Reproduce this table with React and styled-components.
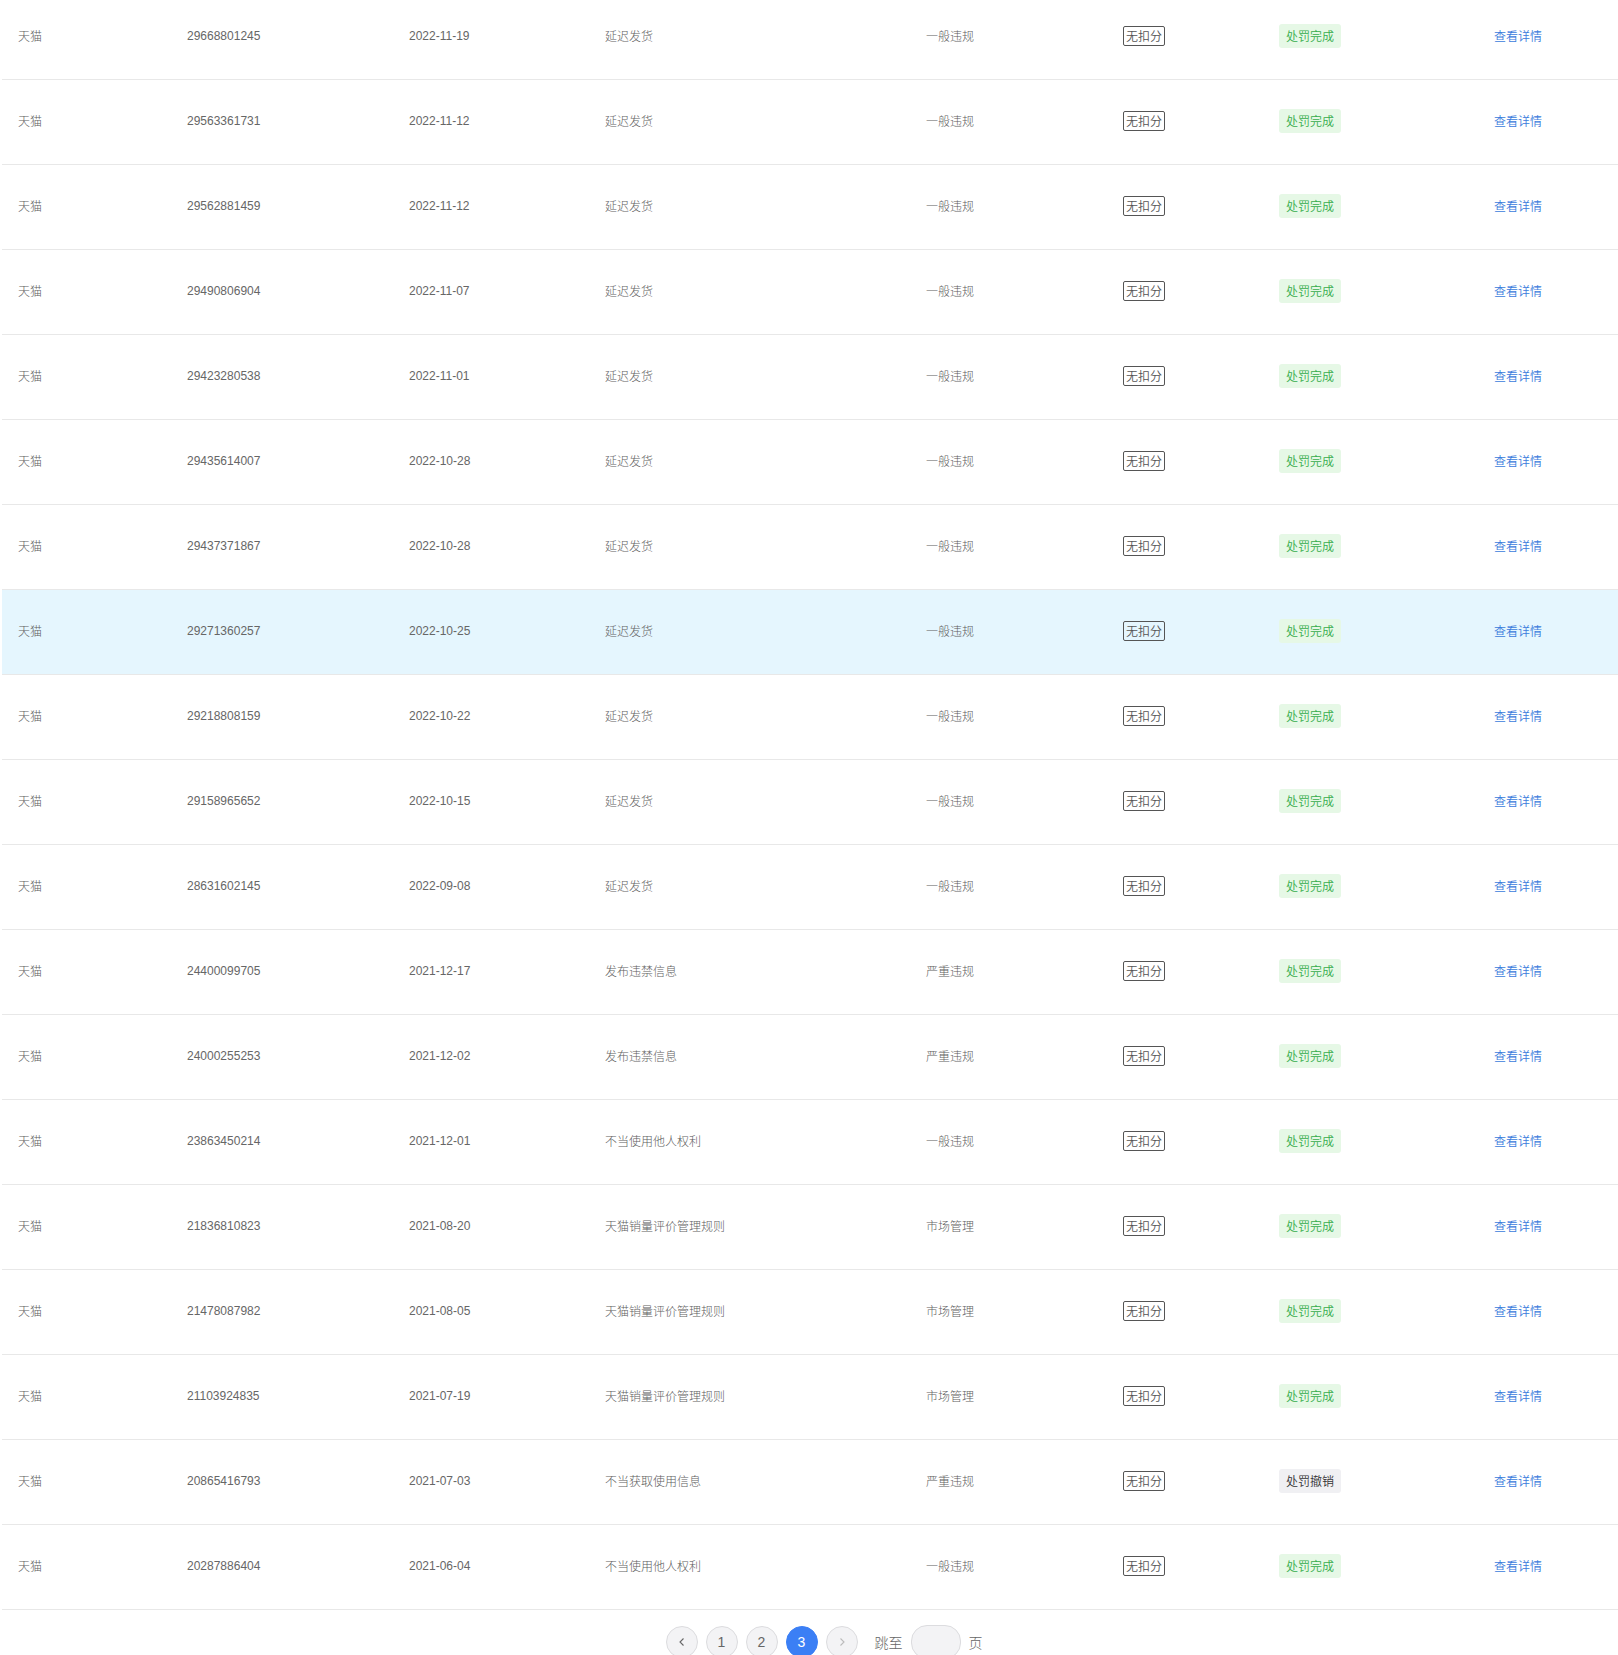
import React from "react";
import styled, { createGlobalStyle, css } from "styled-components";

const Global = createGlobalStyle`
  html, body { margin: 0; padding: 0; background: #fff; }
  body { font-family: "Liberation Sans", Arial, "Noto Sans CJK SC", sans-serif; overflow: hidden; }
`;

const cjk = css`
  font-family: "Noto Sans CJK SC", "Liberation Sans", sans-serif;
  font-weight: 300;
`;

const Page = styled.div`
  width: 1618px;
  height: 1655px;
  overflow: hidden;
`;

const Table = styled.div`
  margin: -5px 0 0 2px;
  display: flex;
  flex-direction: column;
`;

const Row = styled.div`
  display: grid;
  grid-template-columns: 169px 222px 196px 321px 197px 156px 215px 1fr;
  height: 84px;
  border-bottom: 1px solid #e8e8e8;
  background: ${(p) => (p.$active ? "#e5f6fe" : "#fff")};
`;

const Cell = styled.div`
  display: flex;
  align-items: center;
  padding-left: 16px;
  padding-bottom: ${(p) => (p.$cjk || p.$lift ? 4 : 2)}px;
  font-size: 12px;
  color: #666;
  white-space: nowrap;
  ${(p) => p.$cjk && cjk}
  ${(p) => p.$cjk && "color: #606060;"}
`;

const Tag = styled.span`
  ${cjk}
  font-weight: 350;
  display: inline-block;
  border: 1px solid #555;
  border-radius: 2px;
  padding: 0 2px;
  height: 18px;
  line-height: 17px;
  font-size: 12px;
  color: #555;
`;

const Status = styled.span`
  ${cjk}
  font-weight: 350;
  display: inline-block;
  height: 24px;
  line-height: 23px;
  padding: 0 7px;
  border-radius: 3px;
  font-size: 12px;
  background: ${(p) => (p.$revoked ? "#f0f0f3" : "#e6f8e6")};
  color: ${(p) => (p.$revoked ? "#333" : "#36ad4c")};
`;

const Link = styled.a`
  ${cjk}
  font-weight: 350;
  font-size: 12px;
  color: #3a7bdc;
  cursor: pointer;
  text-decoration: none;
`;

const Pager = styled.div`
  display: flex;
  justify-content: center;
  align-items: center;
  padding: 15px 0 0 30px;
  gap: 8px;
`;

const PageBtn = styled.button`
  width: 32px;
  height: 32px;
  border-radius: 50%;
  border: 1px solid ${(p) => (p.$active ? "#3b7ff5" : "#dcdcdf")};
  background: ${(p) => (p.$active ? "#3b7ff5" : "#f3f3f5")};
  color: ${(p) => (p.$active ? "#fff" : p.$disabled ? "#bbb" : "#666")};
  font-family: "Liberation Sans", Arial, sans-serif;
  font-size: 14px;
  display: flex;
  align-items: center;
  justify-content: center;
  padding: 0;
`;

const PagerText = styled.span`
  ${cjk}
  font-size: 14px;
  color: #666;
  margin-left: ${(p) => p.$ml || 0}px;
`;

const JumpInput = styled.div`
  width: 48px;
  height: 32px;
  border-radius: 16px;
  border: 1px solid #dcdcdf;
  background: #f3f3f5;
`;

const rows = [
  ["29668801245", "2022-11-19", "延迟发货", "一般违规"],
  ["29563361731", "2022-11-12", "延迟发货", "一般违规"],
  ["29562881459", "2022-11-12", "延迟发货", "一般违规"],
  ["29490806904", "2022-11-07", "延迟发货", "一般违规"],
  ["29423280538", "2022-11-01", "延迟发货", "一般违规"],
  ["29435614007", "2022-10-28", "延迟发货", "一般违规"],
  ["29437371867", "2022-10-28", "延迟发货", "一般违规"],
  ["29271360257", "2022-10-25", "延迟发货", "一般违规", true],
  ["29218808159", "2022-10-22", "延迟发货", "一般违规"],
  ["29158965652", "2022-10-15", "延迟发货", "一般违规"],
  ["28631602145", "2022-09-08", "延迟发货", "一般违规"],
  ["24400099705", "2021-12-17", "发布违禁信息", "严重违规"],
  ["24000255253", "2021-12-02", "发布违禁信息", "严重违规"],
  ["23863450214", "2021-12-01", "不当使用他人权利", "一般违规"],
  ["21836810823", "2021-08-20", "天猫销量评价管理规则", "市场管理"],
  ["21478087982", "2021-08-05", "天猫销量评价管理规则", "市场管理"],
  ["21103924835", "2021-07-19", "天猫销量评价管理规则", "市场管理"],
  ["20865416793", "2021-07-03", "不当获取使用信息", "严重违规", false, true],
  ["20287886404", "2021-06-04", "不当使用他人权利", "一般违规"],
];

const Chevron = ({ dir }) => (
  <svg width="10" height="10" viewBox="0 0 10 10" fill="none">
    <path
      d={dir === "left" ? "M6.5 1.5 L3 5 L6.5 8.5" : "M3.5 1.5 L7 5 L3.5 8.5"}
      stroke="currentColor"
      strokeWidth="1.1"
    />
  </svg>
);

export default function App() {
  return (
    <Page>
      <Global />
      <Table>
        {rows.map(([id, date, type, level, active, revoked]) => (
          <Row key={id} $active={active}>
            <Cell $cjk>天猫</Cell>
            <Cell>{id}</Cell>
            <Cell>{date}</Cell>
            <Cell $cjk>{type}</Cell>
            <Cell $cjk>{level}</Cell>
            <Cell>
              <Tag>无扣分</Tag>
            </Cell>
            <Cell>
              <Status $revoked={revoked}>{revoked ? "处罚撤销" : "处罚完成"}</Status>
            </Cell>
            <Cell $lift>
              <Link>查看详情</Link>
            </Cell>
          </Row>
        ))}
      </Table>
      <Pager>
        <PageBtn>
          <Chevron dir="left" />
        </PageBtn>
        <PageBtn>1</PageBtn>
        <PageBtn>2</PageBtn>
        <PageBtn $active>3</PageBtn>
        <PageBtn $disabled>
          <Chevron dir="right" />
        </PageBtn>
        <PagerText $ml={9}>跳至</PagerText>
        <JumpInput />
        <PagerText>页</PagerText>
      </Pager>
    </Page>
  );
}
